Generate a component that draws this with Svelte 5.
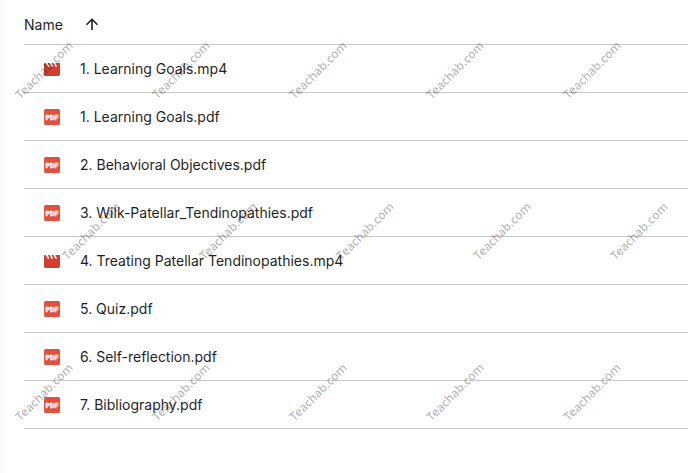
<script lang="ts">
  type FileEntry = { name: string; type: 'video' | 'pdf' };

  let files: FileEntry[] = $state([
    { name: '1. Learning Goals.mp4', type: 'video' },
    { name: '1. Learning Goals.pdf', type: 'pdf' },
    { name: '2. Behavioral Objectives.pdf', type: 'pdf' },
    { name: '3. Wilk-Patellar_Tendinopathies.pdf', type: 'pdf' },
    { name: '4. Treating Patellar Tendinopathies.mp4', type: 'video' },
    { name: '5. Quiz.pdf', type: 'pdf' },
    { name: '6. Self-reflection.pdf', type: 'pdf' },
    { name: '7. Bibliography.pdf', type: 'pdf' }
  ]);

  // every second row of marks is shifted sideways
  const marks = [
    { y: 70, start: 44 },
    { y: 231, start: 91 },
    { y: 392, start: 44 }
  ].flatMap(({ y, start }) => [0, 1, 2, 3, 4].map((i) => ({ x: start + i * 137, y })));
</script>

<main>
  <table>
    <thead>
      <tr>
        <th>
          <div class="heading">
            Name
            <button type="button" aria-label="Reverse sort direction" onclick={() => files.reverse()}>
              <svg width="20" height="20" viewBox="0 0 20 20">
                <path d="M10 15V4.500M4.500 9.800 10 4.300l5.500 5.500" fill="none" stroke="#1f1f1f" stroke-width="1.600" />
              </svg>
            </button>
          </div>
        </th>
      </tr>
    </thead>
    <tbody>
      {#each files as file (file.name)}
        <tr>
          <td>
            <div class="file">
              {#if file.type === 'video'}
                <svg width="16" height="16" viewBox="0 0 16 16" aria-hidden="true">
                  <path
                    d="M0 3Q0 2 1 2H1.800L3.800 5.700H5.500L3.700 2H5.600L7.600 5.700H9.300L7.500 2H9.400L11.400 5.700H13.100L11.300 2H16V13.500Q16 15 14.500 15H1.500Q0 15 0 13.500Z"
                    fill="#d23f31"
                  />
                </svg>
              {:else}
                <svg width="16" height="16" viewBox="0 0 16 16" aria-hidden="true">
                  <rect width="16" height="16" rx="1.500" fill="#e34f3f" />
                  <text x="8" y="10.500" text-anchor="middle">PDF</text>
                </svg>
              {/if}
              <span>{file.name}</span>
            </div>
          </td>
        </tr>
      {/each}
    </tbody>
  </table>

  <svg class="watermark" aria-hidden="true">
    {#each marks as mark}
      <text transform="translate({mark.x} {mark.y}) rotate(-45)" text-anchor="middle" dominant-baseline="central">Teachab.com</text>
    {/each}
  </svg>
</main>

<style>
  :global(body) {
    background: #fff;
  }
  main {
    position: relative;
    box-sizing: border-box;
    min-height: 100vh;
    padding-left: 21px;
    border-left: 3px solid #f8faff;
    overflow: hidden;
    color: #1f1f1f;
    font-family: Inter, Roboto, sans-serif;
    font-size: 14px;
    line-height: 20px;
  }
  table {
    width: 100%;
    border-collapse: separate;
    border-spacing: 0;
  }
  th,
  td {
    box-sizing: border-box;
    height: 48px;
    padding: 0;
    border-bottom: 1px solid #c7c7c7;
    text-align: left;
  }
  th {
    height: 45px;
    padding-top: 6px;
    font-weight: 400;
  }
  .heading {
    display: flex;
    align-items: center;
    gap: 19px;
  }
  button {
    display: flex;
    padding: 0;
    border: 0;
    background: none;
    cursor: pointer;
  }
  .file {
    display: flex;
    align-items: center;
    gap: 20px;
    padding-left: 20px;
  }
  .file svg {
    flex: none;
  }
  .file text {
    fill: #fff;
    stroke: #fff;
    stroke-width: 0.3;
    font-family: Roboto, sans-serif;
    font-size: 7px;
    font-weight: 900;
  }
  .watermark {
    position: absolute;
    top: 0;
    left: -3px;
    width: calc(100% + 3px);
    height: 100%;
    pointer-events: none;
  }
  .watermark text {
    fill: #000;
    fill-opacity: 0.3;
    font-family: "Noto Sans", "Open Sans", sans-serif;
    font-size: 12px;
    font-weight: 500;
  }
</style>
